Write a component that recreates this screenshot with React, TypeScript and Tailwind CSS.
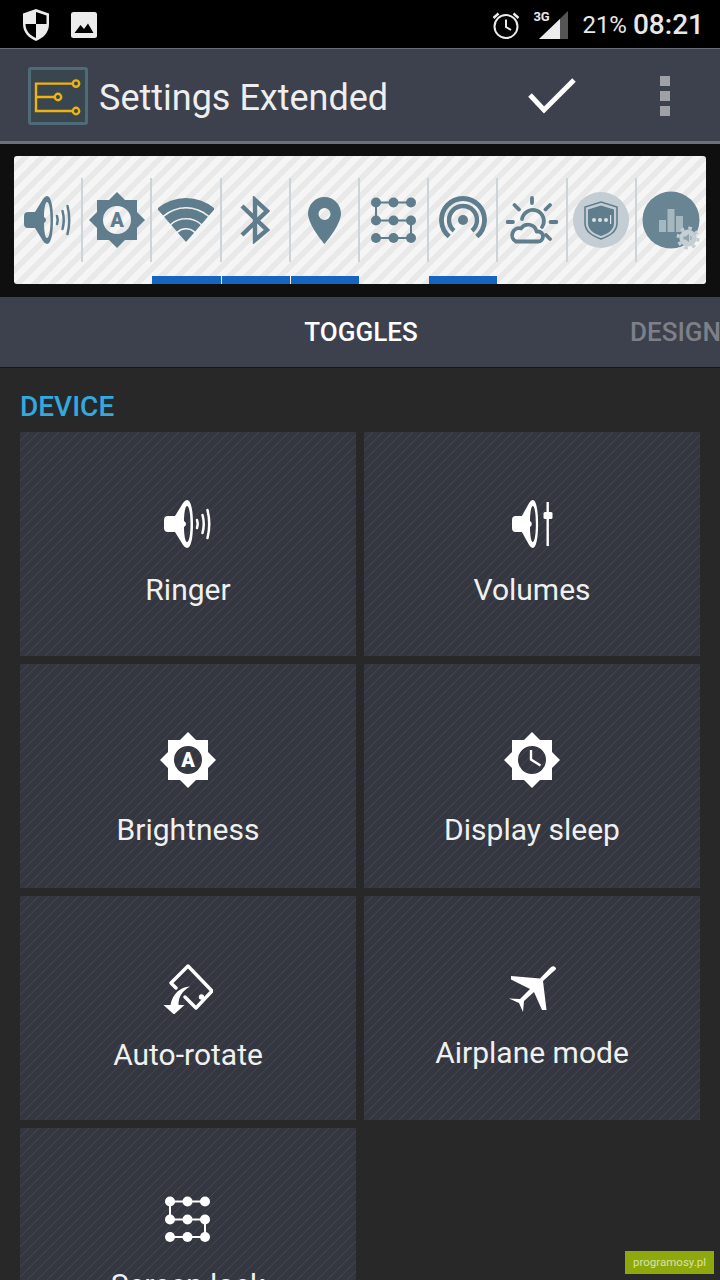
import type { ReactNode } from 'react';

const stripedCard =
  'bg-[repeating-linear-gradient(135deg,#34373f_0,#34373f_6.17px,#444751_6.17px,#444751_7.071px)]';

function Speaker() {
  return (
    <path
      fillRule="evenodd"
      d="M0 20Q0 16 4 16H11L19 3Q21 0 23 0C27 0 29 10 29 24C29 38 27 48 23 48Q21 48 19 45L11 32H4Q0 32 0 28ZM23 6C21.5 6 20 12 20 21Q22 22 22 24Q22 26 20 27C20 36 21.5 42 23 42C25 42 26.5 35 26.5 24C26.5 13 25 6 23 6Z"
    />
  );
}

function RingerIcon() {
  return (
    <svg width="48" height="48" viewBox="0 0 48 48" fill="currentColor">
      <Speaker />
      <g fill="none" stroke="currentColor" strokeWidth="2.5" strokeLinecap="round">
        <path d="M33 20Q34.5 24 33 28" />
        <path d="M38.5 15Q41 24 38.5 33" />
        <path d="M43.5 10Q47 24 43.5 38" />
      </g>
    </svg>
  );
}

function VolumesIcon() {
  return (
    <svg width="48" height="48" viewBox="0 0 48 48" fill="currentColor">
      <g transform="translate(4 0) scale(0.9 1)">
        <Speaker />
      </g>
      <rect x="38.5" y="2" width="2.4" height="44" />
      <rect x="35.5" y="12" width="9" height="7" rx="1.5" />
    </svg>
  );
}

const starPath = 'M28 0L36 8H48V20L56 28L48 36V48H36L28 56L20 48H8V36L0 28L8 20V8H20Z';

function BrightnessIcon() {
  return (
    <svg width="56" height="56" viewBox="0 0 56 56" fill="currentColor">
      <path fillRule="evenodd" d={`${starPath}M28 14A14 14 0 1 0 28 42A14 14 0 1 0 28 14Z`} />
      <text x="28" y="35" textAnchor="middle" fontFamily="Roboto, sans-serif" fontWeight="900" fontSize="20">
        A
      </text>
    </svg>
  );
}

function ClockSunIcon() {
  return (
    <svg width="56" height="56" viewBox="0 0 56 56" fill="currentColor">
      <path fillRule="evenodd" d={`${starPath}M28 14A14 14 0 1 0 28 42A14 14 0 1 0 28 14Z`} />
      <path d="M27 18V27.5L36.5 33.5" fill="none" stroke="currentColor" strokeWidth="2.4" />
    </svg>
  );
}

function RotateIcon() {
  return (
    <svg width="50" height="50" viewBox="0 0 50 50" fill="currentColor">
      <path
        d="M13 24L8 19L25 2L49 27L33 44L22 33"
        fill="none"
        stroke="currentColor"
        strokeWidth="3.4"
        strokeLinejoin="round"
        strokeLinecap="round"
      />
      <circle cx="38.5" cy="33" r="2.7" />
      <path d="M0.5 41H21.5L11 50.5Z" />
      <path d="M27 22.5C17 23 9.5 30 7.5 41H15.5C15.5 33 19 27 27 22.5Z" />
    </svg>
  );
}

function PlaneIcon() {
  return (
    <svg width="50" height="50" viewBox="0 0 50 50" fill="currentColor">
      <path d="M48.5 3.5Q46 1 43 4L33 14.5L4 12V15.5L23 25L13 35L2 34.5L12 39L16 48L17 37L27 28L35 46H39.5L36 17L47 7Q50 5 48.5 3.5Z" />
    </svg>
  );
}

function PatternIcon() {
  const xs = [6, 23.5, 41];
  const ys = [5.5, 23.5, 41];
  return (
    <svg width="48" height="46" viewBox="0 0 48 46" fill="currentColor">
      <path
        d="M6 5.5H41M6 5.5V23.5M6 23.5H41M41 23.5V41M6 41H41"
        fill="none"
        stroke="currentColor"
        strokeWidth="2"
      />
      {ys.map((y) => xs.map((x) => <circle key={`${x}-${y}`} cx={x} cy={y} r="5" />))}
    </svg>
  );
}

function band(outer: number, inner: number) {
  const a = (41 * Math.PI) / 180;
  const s = Math.sin(a);
  const c = Math.cos(a);
  const cx = 28;
  const cy = 44;
  return `M${cx - outer * s} ${cy - outer * c}A${outer} ${outer} 0 0 1 ${cx + outer * s} ${cy - outer * c}L${cx + inner * s} ${cy - inner * c}A${inner} ${inner} 0 0 0 ${cx - inner * s} ${cy - inner * c}Z`;
}

function WifiIcon() {
  return (
    <svg width="56" height="44" viewBox="0 0 56 44" fill="currentColor">
      <path d={band(44, 35)} />
      <path d={band(33.4, 24)} />
      <path d={band(22.4, 14)} />
      <path d={band(12.4, 0)} />
    </svg>
  );
}

function BluetoothIcon() {
  return (
    <svg width="30" height="48" viewBox="0 0 30 48" fill="none" stroke="currentColor" strokeWidth="4.4">
      <path d="M2 10L27 34L15 44V4L27 15L2 39" />
    </svg>
  );
}

function PinIcon() {
  return (
    <svg width="33" height="47" viewBox="0 0 33 47" fill="currentColor">
      <path
        fillRule="evenodd"
        d="M16.5 0C7.5 0 0 7.5 0 16.5C0 28 16.5 47 16.5 47S33 28 33 16.5C33 7.5 25.5 0 16.5 0ZM16.5 11A6 6 0 1 1 16.5 23A6 6 0 1 1 16.5 11Z"
      />
    </svg>
  );
}

function HotspotIcon() {
  return (
    <svg width="48" height="48" viewBox="0 0 48 48" fill="none" stroke="currentColor">
      <path strokeWidth="4.8" d="M10.2 40.5A21.5 21.5 0 1 1 37.8 40.5" />
      <path strokeWidth="4.4" d="M15 34.7A14 14 0 1 1 33 34.7" />
      <circle cx="24" cy="24" r="5" fill="currentColor" stroke="none" />
    </svg>
  );
}

function WeatherIcon() {
  return (
    <svg width="52" height="48" viewBox="0 0 52 48" fill="none" stroke="currentColor" strokeWidth="3.8" strokeLinecap="round">
      <path d="M16 23A11 11 0 1 1 36 31" />
      <path d="M10 45.5H32a5 5 0 0 0 0-10h-1.5a8.5 8.5 0 0 0-15.5-3a7 7 0 0 0-5 13Z" strokeLinejoin="round" />
      <path d="M26 2V7M8.5 9L13 13.5M44 9L39.5 13.5M1.5 26H7M44.5 26H50.5M40 39L44 43" />
    </svg>
  );
}

function ShieldBadge() {
  return (
    <svg width="56" height="56" viewBox="0 0 56 56">
      <circle cx="28" cy="28" r="28" fill="#c3cdd3" />
      <path d="M28 10L44 15V31C44 40 36 44 28 47C20 44 12 40 12 31V15Z" fill="none" stroke="#5f7d8c" strokeWidth="1.6" />
      <path d="M28 13.5L41 17.5V31C41 38 35 41.5 28 44C21 41.5 15 38 15 31V17.5Z" fill="#5f7d8c" />
      <g fill="#dbe2e6">
        <circle cx="21" cy="28" r="2" />
        <circle cx="27" cy="28" r="2" />
        <circle cx="33" cy="28" r="2" />
        <rect x="37" y="23" width="1.2" height="9" />
      </g>
    </svg>
  );
}

function BarsBadge() {
  return (
    <svg width="62" height="64" viewBox="0 0 62 64">
      <g transform="translate(2 4)">
        <circle cx="29" cy="28" r="28.5" fill="#698593" />
        <g fill="#a7b7bf">
          <rect x="17" y="28" width="7" height="12" />
          <rect x="25.5" y="17" width="7" height="23" />
          <rect x="34" y="24" width="7" height="16" />
        </g>
        <circle cx="46" cy="46" r="8.6" fill="#c4ced3" />
        <circle cx="46" cy="46" r="10" fill="none" stroke="#c4ced3" strokeWidth="3" strokeDasharray="3.6 4.25" />
        <path d="M41.5 44.5H43.5L47 42V50L43.5 47.5H41.5Z" fill="#8fa3ad" />
        <path d="M48.5 44Q50 46 48.5 48" fill="none" stroke="#8fa3ad" strokeWidth="1" />
      </g>
    </svg>
  );
}

function AppLogo() {
  return (
    <div className="flex h-[58px] w-[60px] items-center justify-center rounded-[3px] border-[3px] border-[#4f6b78] bg-[#39454f]">
      <svg width="48" height="40" viewBox="0 0 48 40" fill="none" stroke="#eeb211" strokeWidth="2.4">
        <path d="M39 7.6H2V35H39M2 21H21" />
        <circle cx="42" cy="7.6" r="3.2" />
        <circle cx="24" cy="21" r="3.2" />
        <circle cx="42" cy="35" r="3.2" />
      </svg>
    </div>
  );
}

const widgetItems: { icon: ReactNode; active?: boolean }[] = [
  { icon: <RingerIcon /> },
  { icon: <BrightnessIcon /> },
  { icon: <WifiIcon />, active: true },
  { icon: <BluetoothIcon />, active: true },
  { icon: <PinIcon />, active: true },
  { icon: <PatternIcon /> },
  { icon: <HotspotIcon />, active: true },
  { icon: <WeatherIcon /> },
  { icon: <ShieldBadge /> },
  { icon: <BarsBadge /> },
];

const toggles: { label: string; icon: ReactNode; gap: string }[] = [
  { label: 'Ringer', icon: <RingerIcon />, gap: 'mt-[26px]' },
  { label: 'Volumes', icon: <VolumesIcon />, gap: 'mt-[26px]' },
  { label: 'Brightness', icon: <BrightnessIcon />, gap: 'mt-[26px]' },
  { label: 'Display sleep', icon: <ClockSunIcon />, gap: 'mt-[26px]' },
  { label: 'Auto-rotate', icon: <RotateIcon />, gap: 'mt-[25px]' },
  { label: 'Airplane mode', icon: <PlaneIcon />, gap: 'mt-[23px]' },
  { label: 'Screen lock', icon: <PatternIcon />, gap: 'mt-[27px]' },
];

export default function App() {
  return (
    <div className="relative h-[1280px] w-[720px] overflow-hidden bg-[#282828] font-['Roboto',sans-serif]">
      {/* status bar */}
      <div className="flex h-[48px] items-center bg-black pt-px pr-[16px] pl-[23px] text-[#e8e8e8]">
        <svg width="26" height="32" viewBox="0 0 26 32" fill="#ececec">
          <path d="M13 0L26 4.5V15C26 24 20 29 13 32C6 29 0 24 0 15V4.5Z" />
          <path d="M13 3L23.5 6.5V15H13ZM13 15V29C7.5 26.5 2.6 22.5 2.5 15Z" fill="#000" />
        </svg>
        <svg className="ml-[22px]" width="26" height="26" viewBox="0 0 26 26">
          <rect width="26" height="26" rx="2.5" fill="#ececec" />
          <path d="M3.5 21L9.5 13L13 17L17 11.5L22.5 21Z" fill="#000" />
        </svg>
        <svg className="ml-auto" width="28" height="28" viewBox="0 0 28 28" fill="none" stroke="#ececec" strokeWidth="2">
          <circle cx="14" cy="15.5" r="11.5" />
          <path d="M14 8.5V16L19 19" />
          <path d="M1.5 7L6.5 2.5M26.5 7L21.5 2.5" strokeWidth="2.4" />
        </svg>
        <div className="relative ml-[13px] h-[28px] w-[36px]">
          <span className="absolute top-[-2px] left-0 text-[13px] leading-[16px] font-bold text-[#e8e8e8]">3G</span>
          <svg className="absolute top-0 left-[6px]" width="29" height="28" viewBox="0 0 29 28">
            <path d="M0 28L29 0V28Z" fill="#555" />
            <path d="M0 28L21 8V28Z" fill="#ececec" />
          </svg>
        </div>
        <span className="ml-[13px] text-[24px] leading-none">21%</span>
        <span className="ml-[6px] text-[28px] leading-none font-medium">08:21</span>
      </div>

      {/* action bar */}
      <div className="flex h-[96px] items-center border-t border-b-[3px] border-t-[#6a6d79] border-b-[#6f7179] bg-[#3d414d] pt-px pl-[28px]">
        <AppLogo />
        <span className="mt-[4px] ml-[11px] text-[36px] leading-none text-[#eeeeee]">Settings Extended</span>
        <svg className="ml-[140px]" width="48" height="36" viewBox="0 0 48 36" fill="none" stroke="#fff" strokeWidth="5">
          <path d="M2 17L16 32L46 2" />
        </svg>
        <div className="ml-[84px] flex flex-col gap-[5px]">
          <span className="h-[10px] w-[10px] bg-[#a0a1a6]" />
          <span className="h-[10px] w-[10px] bg-[#a0a1a6]" />
          <span className="h-[10px] w-[10px] bg-[#a0a1a6]" />
        </div>
      </div>

      {/* widget preview */}
      <div className="h-[153px] bg-[#0f0f0f] px-[14px] pt-[12px]">
        <div className="grid h-[128px] grid-cols-10 overflow-hidden rounded-[3px] bg-[repeating-linear-gradient(135deg,#f5f5f5_0,#f5f5f5_6.01px,#e9e9e9_6.01px,#e9e9e9_12.02px)]">
          {widgetItems.map((item, i) => (
            <div key={i} className="flex flex-col pt-[22px]">
              <div
                className={
                  i < 9
                    ? 'flex h-[84px] items-center justify-center border-r-2 border-[#cdd4d8] text-[#5f7d8c]'
                    : 'flex h-[84px] items-center justify-center text-[#5f7d8c]'
                }
              >
                {item.icon}
              </div>
              <div className={item.active ? 'mt-[14px] mr-px h-2 bg-[#1565c0]' : 'mt-[14px] h-2'} />
            </div>
          ))}
        </div>
      </div>

      {/* tabs */}
      <div className="relative flex h-[71px] items-center justify-center border-b border-[#15161a] bg-[#3d414d] text-[26px] font-medium">
        <span className="ml-[2px] text-white">TOGGLES</span>
        <span className="absolute left-[630px] text-[#7d8088]">DESIGN</span>
      </div>

      {/* device section */}
      <div className="px-[20px]">
        <h2 className="mt-[23px] text-[28px] leading-[32px] font-medium text-[#33a9e0]">DEVICE</h2>
        <div className="mt-[9px] grid grid-cols-2 gap-[8px]">
          {toggles.map((t) => (
            <div key={t.label} className={`flex h-[224px] flex-col items-center pt-[68px] text-white ${stripedCard}`}>
              {t.icon}
              <span className={`${t.gap} text-[30px] leading-[32px] text-[#f0f0f0]`}>{t.label}</span>
            </div>
          ))}
        </div>
      </div>

      {/* watermark */}
      <div className="absolute right-[6px] bottom-[6px] flex h-[23px] w-[89px] items-center justify-center bg-[#8fa80c] text-[11.5px] text-[#d8e3a6]">
        programosy.pl
      </div>
    </div>
  );
}
